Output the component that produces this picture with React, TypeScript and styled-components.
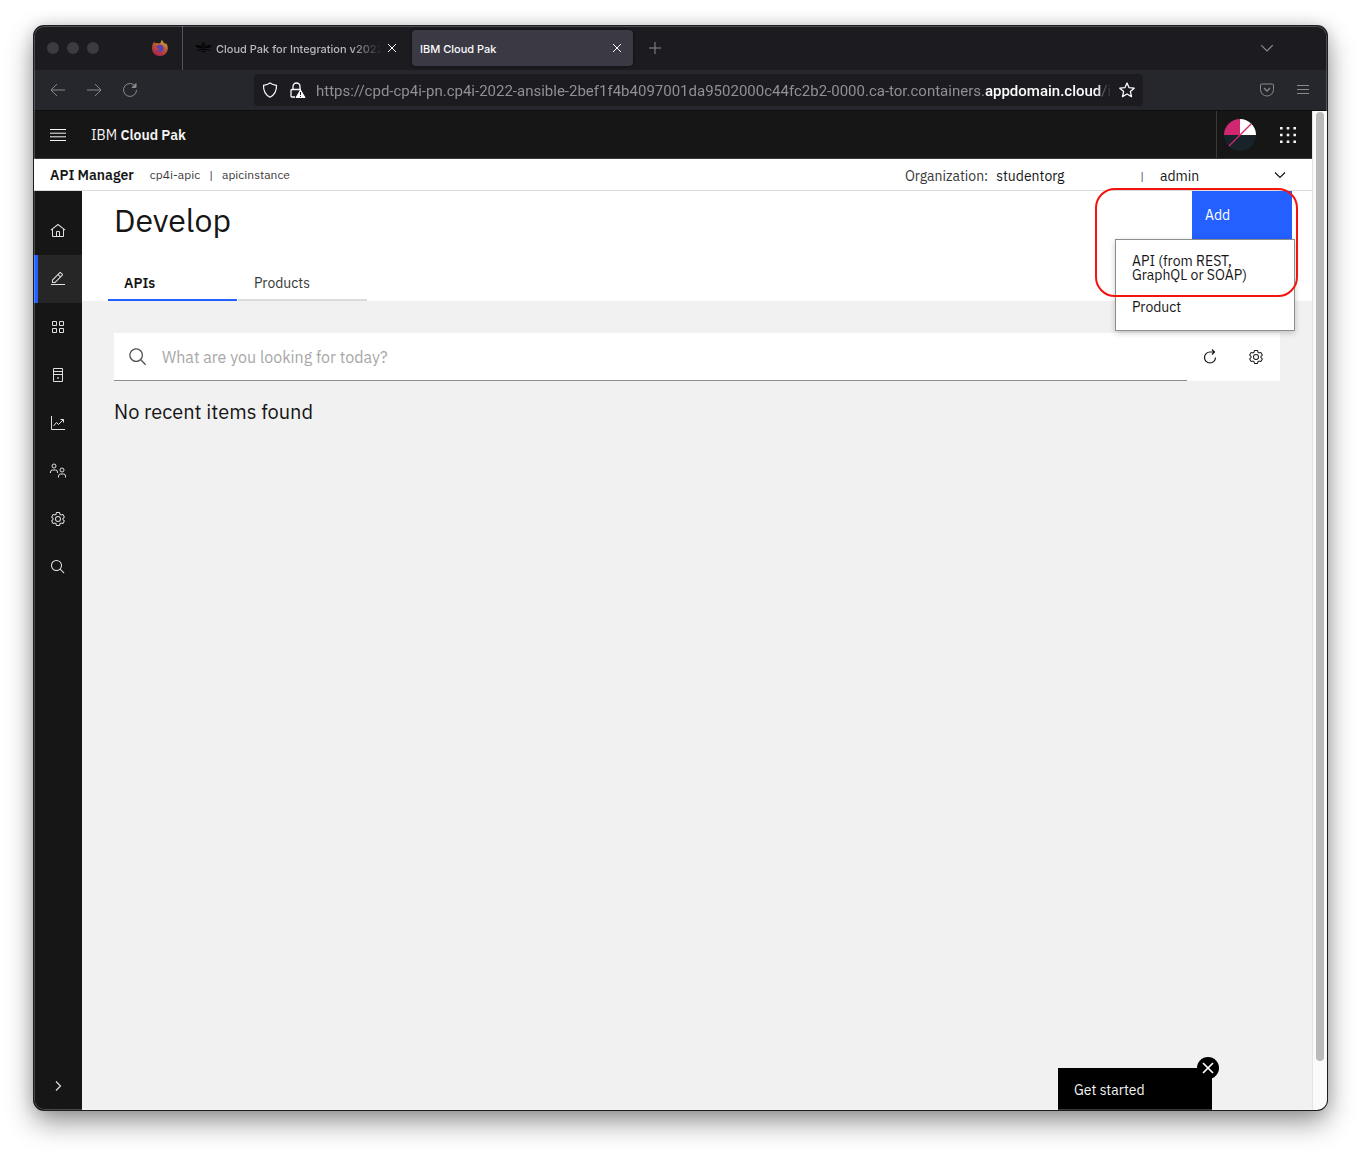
import React from 'react';
import styled, { createGlobalStyle, css } from 'styled-components';

const sans = `"IBM Plex Sans", Roboto, "Noto Sans", sans-serif`;
const chrome = `Inter, "Liberation Sans", sans-serif`;

const GlobalStyle = createGlobalStyle`
  *, *::before, *::after { box-sizing: border-box; }
  body { margin: 0; background: #fff; color: #161616; font-family: ${sans}; font-size: 14px; line-height: 18px; }
  button, input, select { font: inherit; color: inherit; }
  button { border: 0; padding: 0; background: none; cursor: pointer; }
  h1, h2, p, ul { margin: 0; padding: 0; font-weight: 400; }
  ul { list-style: none; }
  a { color: inherit; text-decoration: none; }
`;

const Desktop = styled.div`
  min-height: 100vh;
  padding: 26px 34px 42px;
  display: flex;
`;

const Window = styled.div`
  position: relative;
  flex: 1;
  min-width: 0;
  display: flex;
  flex-direction: column;
  border-radius: 10px;
  overflow: hidden;
  background: #161616;
  box-shadow: 0 0 0 1px #1d1d1f, 0 12px 28px rgba(0, 0, 0, 0.42), 0 0 16px rgba(0, 0, 0, 0.16);
  &::after {
    content: '';
    position: absolute;
    inset: 0;
    border-radius: 10px;
    box-shadow: inset 0 0 0 1px rgba(255, 255, 255, 0.22);
    pointer-events: none;
  }
`;

const TabStrip = styled.div`
  display: flex;
  align-items: center;
  height: 44px;
  background: #1c1b20;
  color: #fbfbfe;
  font: 500 11px/16px ${chrome};
`;

const Lights = styled.div`
  display: flex;
  gap: 8px;
  padding: 0 51px 0 13px;
`;
const Light = styled.span`
  width: 12px;
  height: 12px;
  border-radius: 50%;
  background: #3c3b40;
`;

const PinnedTab = styled.button`
  height: 44px;
  width: 33px;
  padding: 0 13px 0 1px;
  border-right: 1px solid #55545a;
  display: flex;
  align-items: center;
`;

const BrowserTab = styled.div<{ $active?: boolean }>`
  display: flex;
  align-items: center;
  gap: 4px;
  height: 36px;
  width: ${p => (p.$active ? 221 : 225)}px;
  margin-left: ${p => (p.$active ? 4 : 0)}px;
  padding: 0 10px 0 ${p => (p.$active ? 8 : 12)}px;
  border-radius: 4px;
  ${p => p.$active
    ? css`background: #3b3943; box-shadow: 0 0 3px rgba(0, 0, 0, 0.6);`
    : css`color: #b9b9be;`}
`;
const TabTitle = styled.span<{ $fade?: boolean }>`
  flex: 1;
  min-width: 0;
  padding-top: 2px;
  overflow: hidden;
  white-space: nowrap;
  ${p => p.$fade && css`mask-image: linear-gradient(to left, transparent, #000 30px);`}
`;

const ChromeButton = styled.button<{ $size?: number; $dim?: boolean }>`
  display: grid;
  place-items: center;
  flex: none;
  width: ${p => p.$size ?? 36}px;
  height: ${p => p.$size ?? 36}px;
  color: ${p => (p.$dim ? '#8a8a8e' : '#fbfbfe')};
`;
const Push = styled.span`
  flex: 1;
`;
const TabListButton = styled(ChromeButton)`
  margin-right: 42px;
`;

const Toolbar = styled.div`
  display: flex;
  align-items: center;
  height: 41px;
  padding: 0 6px;
  border-bottom: 1px solid #0e0e10;
  background: #26272c;
`;

const AddressBar = styled.div`
  flex: 1;
  min-width: 0;
  display: flex;
  align-items: center;
  height: 32px;
  margin: 0 106px;
  padding: 0 2px;
  border-radius: 4px;
  background: #1c1b20;
  color: #8f8f94;
  font: 400 15px/20px Roboto, ${chrome};
`;
const Url = styled.div`
  flex: 1;
  min-width: 0;
  margin-left: 4px;
  padding-top: 2px;
  overflow: hidden;
  white-space: nowrap;
  mask-image: linear-gradient(to left, transparent, #000 16px);
  b { color: #fbfbfe; font-weight: 500; }
`;

const Viewport = styled.div`
  flex: 1;
  display: flex;
  min-height: 0;
`;
const Site = styled.div`
  flex: 1;
  min-width: 0;
  display: flex;
  flex-direction: column;
`;
const ScrollTrack = styled.div`
  width: 15px;
  padding: 1px 3px 49px;
  border-left: 1px solid #e3e3e3;
  background: #fafafa;
  display: flex;
`;
const ScrollThumb = styled.div`
  width: 8px;
  border-radius: 4px;
  background: #bababa;
`;

const Masthead = styled.header`
  display: flex;
  align-items: center;
  height: 48px;
  border-bottom: 1px solid #393939;
  background: #161616;
  color: #f4f4f4;
`;
const MastButton = styled.button<{ $divided?: boolean }>`
  display: grid;
  place-items: center;
  width: 48px;
  height: 47px;
  ${p => p.$divided && css`border-left: 1px solid #393939; padding-right: 1px;`}
`;
const Brand = styled.a`
  margin-left: 9px;
  font-size: 14px;
  b { font-weight: 600; }
`;

const Context = styled.div`
  display: flex;
  align-items: center;
  height: 32px;
  padding: 0 24px 0 16px;
  border-bottom: 1px solid #dcdcdc;
  background: #fff;
`;
const Product = styled.strong`
  font-weight: 600;
  margin-right: 16px;
`;
const Crumbs = styled.span`
  display: flex;
  gap: 9px;
  font-size: 12px;
  color: #393939;
`;
const Account = styled.div`
  display: flex;
  align-items: center;
  margin-left: auto;
  padding-top: 2px;
`;
const OrgLabel = styled.span`
  color: #393939;
  margin-right: 8px;
`;
const OrgName = styled.span`
  width: 144px;
`;
const Divider = styled.span`
  font-size: 12px;
  color: #525252;
`;
const RoleSelect = styled.label`
  position: relative;
  display: flex;
  align-items: center;
  margin-left: 16px;
  svg { position: absolute; right: 0; pointer-events: none; }
`;
const Select = styled.select`
  appearance: none;
  width: 128px;
  padding: 0;
  border: 0;
  background: none;
`;

const Body = styled.div`
  flex: 1;
  display: flex;
`;
const SideNav = styled.nav`
  width: 48px;
  padding-top: 16px;
  display: flex;
  flex-direction: column;
  background: #161616;
  color: #e0e0e0;
`;
const NavLink = styled.a<{ $active?: boolean }>`
  display: grid;
  place-items: center;
  width: 48px;
  height: 48px;
  ${p => p.$active && css`background: #262626; box-shadow: inset 4px 0 #2460ff;`}
`;
const Expand = styled.button`
  display: grid;
  place-items: center;
  height: 48px;
  margin-top: auto;
`;

const Content = styled.div`
  flex: 1;
  min-width: 0;
  display: flex;
  flex-direction: column;
  background: #f1f1f1;
`;
const PageHeader = styled.div`
  display: flex;
  justify-content: space-between;
  height: 110px;
  padding: 0 20px 0 26px;
  background: #fff;
`;
const TitleColumn = styled.div`
  display: flex;
  flex-direction: column;
  justify-content: space-between;
`;
const Title = styled.h1`
  padding: 9px 0 0 6px;
  font-size: 32px;
  line-height: 40px;
`;
const Tabs = styled.div`
  display: flex;
  gap: 1px;
`;
const Tab = styled.button<{ $active?: boolean }>`
  width: 129px;
  height: 36px;
  padding: 2px 16px 0;
  border-bottom: 2px solid ${p => (p.$active ? '#2460ff' : '#dcdcdc')};
  color: ${p => (p.$active ? '#161616' : '#393939')};
  font-weight: ${p => (p.$active ? 600 : 400)};
  text-align: left;
`;

const AddArea = styled.div`
  position: relative;
`;
const AddButton = styled.button`
  width: 100px;
  height: 48px;
  padding: 0 13px;
  background: #2460ff;
  color: #fff;
  text-align: left;
`;
const Menu = styled.ul`
  position: absolute;
  z-index: 1;
  top: 48px;
  right: -3px;
  width: 180px;
  padding: 14px 16px 16px;
  display: flex;
  flex-direction: column;
  gap: 18px;
  border: 1px solid #8d8d8d;
  background: #fff;
  box-shadow: 0 2px 6px rgba(0, 0, 0, 0.2);
`;
const MenuItem = styled.button`
  display: block;
  width: 100%;
  line-height: 14px;
  text-align: left;
`;
const Highlight = styled.div`
  position: absolute;
  z-index: 2;
  top: -3px;
  right: -6px;
  width: 203px;
  height: 109px;
  border: 2px solid #f5130f;
  border-radius: 20px;
  pointer-events: none;
`;

const Main = styled.main`
  flex: 1;
  display: flex;
  flex-direction: column;
  padding: 32px 32px 0;
`;
const SearchRow = styled.div`
  display: flex;
  height: 48px;
  padding-right: 1px;
  background: #fff;
`;
const SearchField = styled.label`
  flex: 1;
  display: flex;
  align-items: center;
  gap: 14px;
  padding-left: 14px;
  border-bottom: 1px solid #8d8d8d;
  color: #525252;
`;
const SearchInput = styled.input`
  flex: 1;
  border: 0;
  padding: 0;
  outline: 0;
  background: none;
  font-size: 16px;
  &::placeholder { color: #a8a8a8; opacity: 1; }
`;
const IconButton = styled.button`
  display: grid;
  place-items: center;
  width: 46px;
`;
const Empty = styled.h2`
  margin-top: 18px;
  font-size: 20px;
  line-height: 26px;
`;
const GetStarted = styled.div`
  position: relative;
  width: 154px;
  height: 42px;
  margin: auto 68px 0 auto;
  background: #000;
  color: #f4f4f4;
`;
const StartButton = styled.button`
  width: 100%;
  height: 42px;
  padding: 2px 16px 0;
  text-align: left;
`;
const Dismiss = styled.button`
  position: absolute;
  top: -11px;
  right: -7px;
  display: grid;
  place-items: center;
  width: 22px;
  height: 22px;
  border-radius: 50%;
  background: #000;
  color: #fff;
`;

type IconProps = { size?: number; box?: number; stroke?: number; children: React.ReactNode };
const Line = ({ size = 16, box = 16, stroke = 1, children }: IconProps) => (
  <svg width={size} height={size} viewBox={`0 0 ${box} ${box}`} fill="none" stroke="currentColor" strokeWidth={stroke} aria-hidden="true">{children}</svg>
);
const Solid = ({ size = 16, box = 32, children }: IconProps) => (
  <svg width={size} height={size} viewBox={`0 0 ${box} ${box}`} fill="currentColor" aria-hidden="true">{children}</svg>
);

const Close = () => <Line size={10} box={10}><path d="M1 1l8 8M9 1l-8 8" /></Line>;
const ChevronDown = ({ size = 12 }: { size?: number }) => <Line size={size} box={12}><path d="M1 3.500l5 5 5-5" /></Line>;
const Gear = ({ size = 16 }: { size?: number }) => (
  <Solid size={size}>
    <path d="M27 16.76c0-.25 0-.5 0-.76s0-.51 0-.77l1.92-1.68A2 2 0 0029.3 11L26.94 7a2 2 0 00-1.73-1 2 2 0 00-.64.1l-2.43.82a11.35 11.35 0 00-1.31-.75l-.51-2.52a2 2 0 00-2-1.61H13.64a2 2 0 00-2 1.61l-.51 2.52a11.48 11.48 0 00-1.32.75L7.43 6.06A2 2 0 006.79 6 2 2 0 005.06 7L2.7 11a2 2 0 00.41 2.51L5 15.24c0 .25 0 .5 0 .76s0 .51 0 .77L3.11 18.45A2 2 0 002.7 21L5.06 25a2 2 0 001.73 1 2 2 0 00.64-.1l2.43-.82a11.35 11.35 0 001.31.75l.51 2.52a2 2 0 002 1.61h4.72a2 2 0 002-1.61l.51-2.52a11.48 11.48 0 001.32-.75l2.42.82a2 2 0 00.64.1 2 2 0 001.73-1L29.3 21a2 2 0 00-.41-2.51ZM25.21 24l-3.43-1.16a8.86 8.86 0 01-2.71 1.57L18.36 28H13.64l-.71-3.55a9.36 9.36 0 01-2.7-1.57L6.79 24 4.43 20l2.72-2.4a8.9 8.9 0 010-3.13L4.43 12 6.79 8l3.43 1.16a8.86 8.86 0 012.71-1.57L13.64 4h4.72l.71 3.55a9.36 9.36 0 012.7 1.57L25.21 8 27.57 12l-2.72 2.4a8.9 8.9 0 010 3.13L27.57 20Z" />
    <path d="M16 22a6 6 0 116-6 5.94 5.94 0 01-6 6Zm0-10a3.91 3.91 0 00-4 4 3.91 3.91 0 004 4 3.91 3.91 0 004-4 3.91 3.91 0 00-4-4Z" />
  </Solid>
);
const SearchIcon = ({ size = 16 }: { size?: number }) => (
  <Solid size={size}><path d="M29 27.5859l-7.5521-7.5521a11.0177 11.0177 0 10-1.4141 1.4141L27.5859 29ZM4 13a9 9 0 119 9 9.01 9.01 0 01-9-9Z" /></Solid>
);
const Fox = () => (
  <svg width="18" height="18" viewBox="0 0 18 18" aria-hidden="true">
    <defs>
      <linearGradient id="fox" x1="0.8" y1="0" x2="0.3" y2="1">
        <stop offset="0" stopColor="#cdb04a" />
        <stop offset="0.45" stopColor="#c25a2c" />
        <stop offset="1" stopColor="#a51d50" />
      </linearGradient>
    </defs>
    <path fill="url(#fox)" d="M10.500 .8c1 .7 1.700 1.700 2.200 3 .9.300 1.600.9 2.200 1.700 0-.8-.2-1.400-.5-2 1.700 1.500 2.500 3.700 2.400 6-.2 4.400-3.700 7.700-7.900 7.700C4.600 17.200 1.100 13.800 1 9.500 1 7 1.600 4.200 3.400 2.200c-.1.900 0 1.600.4 2.300 1.400-.6 3-.5 4.200.1C9.800 4 10.600 2.500 10.500.8z" />
    <path fill="#5b3fb8" d="M5.500 7.800C6.500 5.800 9.500 5 11.400 6.500c1.800 1.500 1.700 4.600-.3 5.900-1.900 1.100-4.700.4-5.300-1.700 1.100.7 2.600.6 3.400-.3l-2.200-.9C6.200 9.200 5.500 8.600 5.500 7.800z" />
  </svg>
);
const Bee = () => (
  <svg width="17" height="14" viewBox="0 0 17 14" fill="#050506" aria-hidden="true">
    <path d="M0 4.500c1.500-1 4.500-.8 7 1v1.200C4.500 7.500 1.500 7 0 4.500zM17 4.500c-1.500-1-4.500-.8-7 1v1.200c2.500.8 5.500.3 7-2.200zM1.500 8.500c1.300.4 3.500 0 4.800-1l.3 1.100c-1.600 1.300-4 1.500-5.100-.1zM15.500 8.500c-1.300.4-3.500 0-4.800-1l-.3 1.100c1.600 1.300 4 1.500 5.100-.1z" />
    <path d="M6.500 3h4V4.400h-4zM6.200 5.200h4.600v1.500H6.200zM6.200 7.500h4.600V9H6.200zM6.600 9.800h3.800v1.400H6.600zM6.500 1.500h1.200l.5 1.200h-1zM10.500 1.500H9.300l-.5 1.200h1z" />
  </svg>
);

const HomeIcon = () => (
  <Solid><path d="M16.6123 2.2138a1.01 1.01 0 00-1.2427 0L1 13.4194l1.2427 1.5717L4 13.6208V26a2.0041 2.0041 0 002 2H26a2.0037 2.0037 0 002-2V13.63L29.7573 15 31 13.4282ZM18 26H14V18h4Zm2 0V18a2.0023 2.0023 0 00-2-2H14a2.002 2.002 0 00-2 2v8H6V12.0615l10-7.79 10 7.8005V26Z" /></Solid>
);
const EditIcon = () => (
  <Solid><path d="M2 26H30V28H2zM25.4 9c.8-.8.8-2 0-2.8l-3.6-3.6c-.8-.8-2-.8-2.8 0l-15 15V24h6.4L25.4 9zM20.4 4L24 7.600l-3 3L17.4 7 20.4 4zM6 22v-3.600l10-10 3.600 3.600-10 10H6z" /></Solid>
);
const GridIcon = () => (
  <Line><path d="M2.500 2.500h4v4h-4zM9.500 2.500h4v4h-4zM2.500 9.500h4v4h-4zM9.500 9.500h4v4h-4z" /></Line>
);
const CatalogIcon = () => (
  <Line><path d="M3.500 1.500h9v13h-9zM3.500 4.500h9M3.500 7.500h9" /><path fill="currentColor" stroke="none" opacity="0.6" d="M7 10h2v2H7z" /></Line>
);
const ChartIcon = () => (
  <Line><path d="M1.500 1v13.500H15" /><path d="M3.500 11l3-3.500 2 2 5-5M10.500 4.500h3v3" /></Line>
);
const PeopleIcon = () => (
  <Line><circle cx="4" cy="3" r="2" /><path d="M.5 10V9a2 2 0 012-2h3a2 2 0 012 2v1" /><circle cx="12" cy="7" r="2" /><path d="M8.500 14.500V13a2 2 0 012-2h3a2 2 0 012 2v1.500" /></Line>
);
const RefreshIcon = () => (
  <Line stroke={1.2}><path d="M12.500 3H8A5.500 5.500 0 1013.500 8.500M10 .5L12.500 3 10 5.500" /></Line>
);

const nav = [
  { name: 'Home', icon: <HomeIcon /> },
  { name: 'Develop', icon: <EditIcon />, active: true },
  { name: 'Manage', icon: <GridIcon /> },
  { name: 'Resources', icon: <CatalogIcon /> },
  { name: 'Analytics', icon: <ChartIcon /> },
  { name: 'Members', icon: <PeopleIcon /> },
  { name: 'Settings', icon: <Gear /> },
  { name: 'Search', icon: <SearchIcon /> },
];

function BrowserChrome() {
  return (
    <>
      <TabStrip>
        <Lights><Light /><Light /><Light /></Lights>
        <PinnedTab aria-label="Firefox View"><Fox /></PinnedTab>
        <BrowserTab>
          <Bee />
          <TabTitle $fade>Cloud Pak for Integration v2022.2</TabTitle>
          <ChromeButton $size={12} aria-label="Close tab"><Close /></ChromeButton>
        </BrowserTab>
        <BrowserTab $active>
          <TabTitle>IBM Cloud Pak</TabTitle>
          <ChromeButton $size={12} aria-label="Close tab"><Close /></ChromeButton>
        </BrowserTab>
        <ChromeButton $size={44} $dim aria-label="New tab"><Line size={12} box={12}><path d="M6 0v12M0 6h12" /></Line></ChromeButton>
        <Push />
        <TabListButton $dim aria-label="List tabs"><ChevronDown size={14} /></TabListButton>
      </TabStrip>
      <Toolbar>
        <ChromeButton $dim aria-label="Back"><Line><path d="M15 8H1.500M7 2L1 8l6 6" /></Line></ChromeButton>
        <ChromeButton $dim aria-label="Forward"><Line><path d="M1 8h13.500M9 2l6 6-6 6" /></Line></ChromeButton>
        <ChromeButton $dim aria-label="Reload"><Line><path d="M13.500 4.500A6.500 6.500 0 1014.500 8" /><path d="M14 1.500v4h-4z" fill="currentColor" /></Line></ChromeButton>
        <AddressBar>
          <ChromeButton $size={28} aria-label="Tracking protection"><Line stroke={1.2}><path d="M8 1c2 1.500 4 2 6.500 2.300C14.700 9 12.500 13 8 15.200 3.500 13 1.300 9 1.500 3.300 4 3 6 2.500 8 1z" /></Line></ChromeButton>
          <ChromeButton $size={28} aria-label="Connection not secure">
            <Line><path strokeWidth="1.300" d="M3 7V4.500a3.500 3.500 0 017 0V7M5 15H2a1 1 0 01-1-1V8.500a1 1 0 011-1h9" /><path d="M10.500 8l4.500 7.500H6z" fill="currentColor" /><path d="M10.500 10v3M10.500 14v1" stroke="#1c1b20" /></Line>
          </ChromeButton>
          <Url role="textbox" aria-label="Address" aria-readonly="true" tabIndex={0}>https://cpd-cp4i-pn.cp4i-2022-ansible-2bef1f4b4097001da9502000c44fc2b2-0000.ca-tor.containers.<b>appdomain.cloud</b>/in</Url>
          <ChromeButton $size={28} aria-label="Bookmark"><Line stroke={1.3}><path strokeLinejoin="round" d="M8 1l2.100 4.700 5.100.5-3.800 3.400 1.100 5L8 12l-4.500 2.600 1.100-5L.8 6.200l5.100-.5z" /></Line></ChromeButton>
        </AddressBar>
        <ChromeButton $dim aria-label="Pocket"><Line size={14} box={14}><path d="M1.500 1h11a1 1 0 011 1v4.500a6.500 6.500 0 01-13 0V2a1 1 0 011-1z" /><path d="M4 5l3 3 3-3" strokeWidth="1.300" /></Line></ChromeButton>
        <ChromeButton $dim aria-label="Open menu"><Line size={12} box={12}><path d="M0 1.500h12M0 5.500h12M0 9.500h12" /></Line></ChromeButton>
      </Toolbar>
    </>
  );
}

export default function App() {
  return (
    <>
      <GlobalStyle />
      <Desktop>
        <Window>
          <BrowserChrome />
          <Viewport>
            <Site>
              <Masthead>
                <MastButton aria-label="Main menu"><Line><path d="M0 2.500h16M0 6.200h16M0 9.800h16M0 13.500h16" /></Line></MastButton>
                <Brand href="#">IBM <b>Cloud Pak</b></Brand>
                <Push />
                <MastButton $divided aria-label="User profile">
                  <svg width="32" height="32" viewBox="0 0 32 32" aria-hidden="true">
                    <circle cx="16" cy="16" r="16" fill="#172329" />
                    <path d="M16 16H0A16 16 0 0116 0z" fill="#d12771" />
                    <path d="M16 16V0a16 16 0 0116 16z" fill="#fff" />
                    <path d="M5 27L27.300 4.700" stroke="#d12771" strokeWidth="1.300" />
                  </svg>
                </MastButton>
                <MastButton aria-label="Switch application">
                  <Solid box={16}><path d="M0 0h2.600v2.600H0zM6.700 0h2.600v2.600H6.700zM13.400 0H16v2.600h-2.600zM0 6.700h2.600v2.600H0zM6.700 6.700h2.600v2.600H6.700zM13.400 6.700H16v2.600h-2.600zM0 13.400h2.600V16H0zM6.700 13.400h2.600V16H6.700zM13.400 13.400H16V16h-2.600z" /></Solid>
                </MastButton>
              </Masthead>
              <Context>
                <Product>API Manager</Product>
                <Crumbs><span>cp4i-apic</span><span>|</span><span>apicinstance</span></Crumbs>
                <Account>
                  <OrgLabel>Organization:</OrgLabel>
                  <OrgName>studentorg</OrgName>
                  <Divider>|</Divider>
                  <RoleSelect>
                    <Select aria-label="User" defaultValue="admin"><option>admin</option></Select>
                    <Line stroke={1.2}><path d="M3 4.500l5 5 5-5" /></Line>
                  </RoleSelect>
                </Account>
              </Context>
              <Body>
                <SideNav aria-label="Main">
                  {nav.map(n => <NavLink key={n.name} href="#" $active={n.active} aria-label={n.name}>{n.icon}</NavLink>)}
                  <Expand aria-label="Expand navigation"><Line stroke={1.2}><path d="M6 3.500L10.500 8 6 12.500" /></Line></Expand>
                </SideNav>
                <Content>
                  <PageHeader>
                    <TitleColumn>
                      <Title>Develop</Title>
                      <Tabs role="tablist">
                        <Tab role="tab" aria-selected $active>APIs</Tab>
                        <Tab role="tab" aria-selected={false}>Products</Tab>
                      </Tabs>
                    </TitleColumn>
                    <AddArea>
                      <AddButton>Add</AddButton>
                      <Menu>
                        <li><MenuItem>API (from REST,<br />GraphQL or SOAP)</MenuItem></li>
                        <li><MenuItem>Product</MenuItem></li>
                      </Menu>
                      <Highlight />
                    </AddArea>
                  </PageHeader>
                  <Main>
                    <SearchRow>
                      <SearchField>
                        <SearchIcon size={20} />
                        <SearchInput type="search" aria-label="Search" placeholder="What are you looking for today?" />
                      </SearchField>
                      <IconButton aria-label="Refresh"><RefreshIcon /></IconButton>
                      <IconButton aria-label="Table settings"><Gear /></IconButton>
                    </SearchRow>
                    <Empty>No recent items found</Empty>
                    <GetStarted>
                      <StartButton>Get started</StartButton>
                      <Dismiss aria-label="Dismiss"><Line size={12} box={12} stroke={1.7}><path d="M1 1l10 10M11 1L1 11" /></Line></Dismiss>
                    </GetStarted>
                  </Main>
                </Content>
              </Body>
            </Site>
            <ScrollTrack><ScrollThumb /></ScrollTrack>
          </Viewport>
        </Window>
      </Desktop>
    </>
  );
}
